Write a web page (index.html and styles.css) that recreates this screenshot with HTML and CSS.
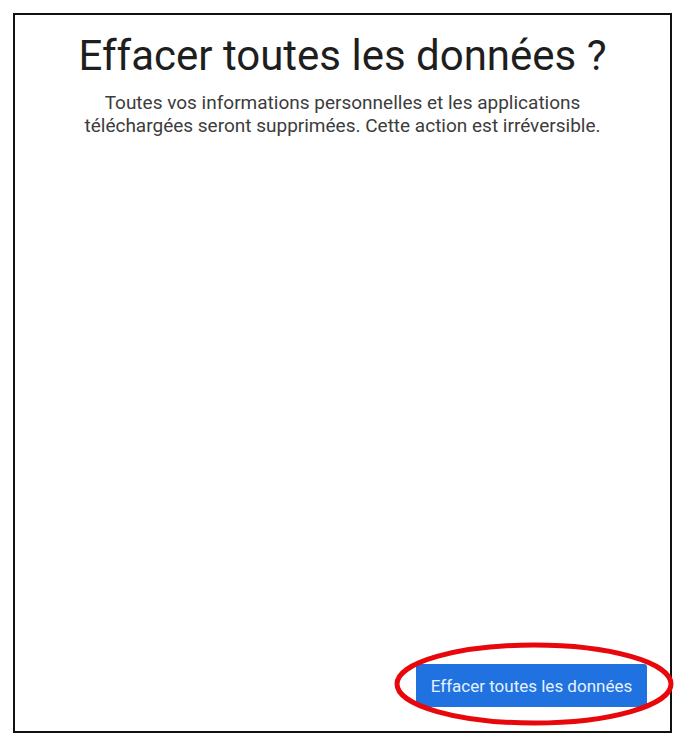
FILE: index.html
```html
<!DOCTYPE html>
<html lang="fr">
<head>
<meta charset="utf-8">
<title>Effacer toutes les données ?</title>
<link rel="stylesheet" href="styles.css">
</head>
<body>
<div class="frame">
  <div class="content">
    <h1 class="title">Effacer toutes les données ?</h1>
    <p class="subtitle">Toutes vos informations personnelles et les applications<br>téléchargées seront supprimées. Cette action est irréversible.</p>
  </div>
  <div class="actions">
    <button class="primary">Effacer toutes les données</button>
  </div>
</div>
<svg class="highlight" width="284" height="88" viewBox="0 0 284 88">
  <ellipse cx="142" cy="44" rx="137" ry="39" fill="none" stroke="#e8070b" stroke-width="5"/>
</svg>
</body>
</html>
```
FILE: styles.css
```css
html, body {
  margin: 0;
  padding: 0;
  background: #ffffff;
}
body {
  position: relative;
  width: 676px;
  height: 740px;
  font-family: Roboto, "Liberation Sans", sans-serif;
}
.frame {
  position: relative;
  margin: 13px 0 0 13px;
  width: 655px;
  height: 716px;
  border: 2px solid #111;
  box-sizing: content-box;
  display: flex;
  flex-direction: column;
  justify-content: space-between;
}
.content {
  display: flex;
  flex-direction: column;
  align-items: center;
  padding-top: 15px;
}
.title {
  margin: 0;
  font-size: 42px;
  font-weight: 400;
  line-height: 52px;
  color: #1e1e1e;
}
.subtitle {
  margin: 9px 0 0;
  font-size: 19px;
  line-height: 23px;
  color: #3c3c3c;
  text-align: center;
}
.actions {
  display: flex;
  justify-content: flex-end;
  padding: 0 23px 24px 0;
}
.primary {
  width: 231px;
  height: 43px;
  border: none;
  border-radius: 3px;
  background: #1f72e0;
  color: #e6f1ff;
  font-family: Roboto, "Liberation Sans", sans-serif;
  font-size: 17px;
  padding: 0;
}
.highlight {
  position: absolute;
  left: 392px;
  top: 640px;
}
```
